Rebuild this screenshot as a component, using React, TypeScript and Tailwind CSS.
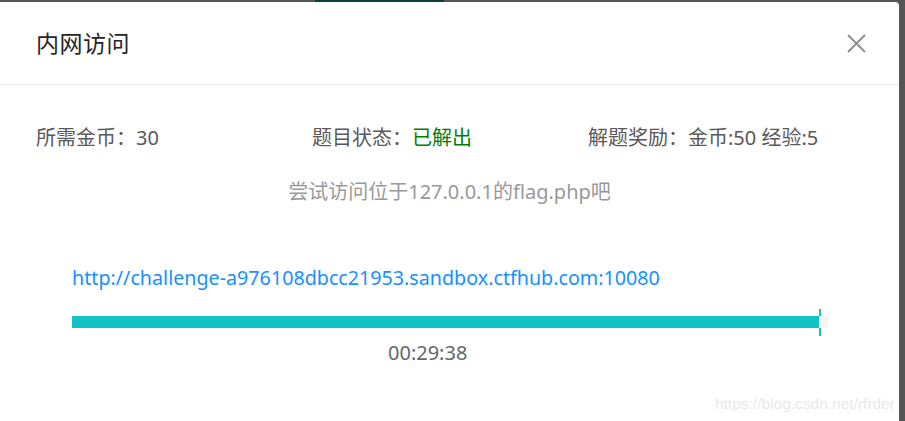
import React from 'react';

const font = { fontFamily: '"Noto Sans", "Noto Sans CJK SC", sans-serif' };

const Progress: React.FC<{ percent: number }> = ({ percent }) => (
  <div className="relative w-[756px] h-[12px]">
    {/* success marker sitting behind the track */}
    <div className="absolute left-[747px] top-[-7px] w-[2px] h-[27px] bg-[#13c2c2]" />
    <div className="relative h-full w-full bg-[#f5f5f5]">
      <div className="h-full bg-[#13c2c2]" style={{ width: `${percent}%` }} />
    </div>
  </div>
);

export default function App() {
  return (
    <div className="w-[905px] h-[421px] bg-[#555555] overflow-hidden flex flex-col" style={font}>
      <div className="h-[2px] flex shrink-0">
        <div className="ml-[315px] w-[129px] bg-[#0a3f38]" />
      </div>
      <div className="flex flex-1">
        <div className="w-[899px] bg-white rounded-tr-[4px] flex flex-col">
          {/* header */}
          <div className="h-[83px] shrink-0 border-b border-[#e8e8e8] flex items-center justify-between pl-[36px] pr-[36px]">
            <span className="text-[23px] tracking-[0.5px] text-[#262626]">内网访问</span>
            <svg width="19" height="19" viewBox="0 0 19 19" className="mr-[-3px]">
              <path d="M1 1L18 18M18 1L1 18" stroke="#8c8c8c" strokeWidth="1.8" />
            </svg>
          </div>

          {/* body */}
          <div className="pt-[41px] px-[36px] text-[20px] leading-[24px] text-[#595959]">
            <div className="grid grid-cols-3 w-[828px]">
              <div>所需金币：30</div>
              <div>
                题目状态：<span className="text-[#008000]">已解出</span>
              </div>
              <div>解题奖励：金币:50 经验:5</div>
            </div>
            <div className="mt-[30px] text-center text-[#999999]">尝试访问位于127.0.0.1的flag.php吧</div>
          </div>

          <div className="pl-[72px] mt-[62px] text-[19.7px] leading-[24px]">
            <a className="text-[#1890ff]">http://challenge-a976108dbcc21953.sandbox.ctfhub.com:10080</a>
          </div>

          <div className="pl-[72px] mt-[26px]">
            <Progress percent={98.8} />
          </div>

          <div className="pl-[388px] mt-[13px] text-[20px] leading-[24px] text-[#666666]">00:29:38</div>

          <div className="flex justify-end pr-[4px] mt-[27px]">
            <span
              className="text-[15.5px] text-[#e8e8e8]"
              style={{ fontFamily: '"Liberation Sans", Arial, sans-serif' }}
            >
              https://blog.csdn.net/rfrder
            </span>
          </div>
        </div>
      </div>
    </div>
  );
}
